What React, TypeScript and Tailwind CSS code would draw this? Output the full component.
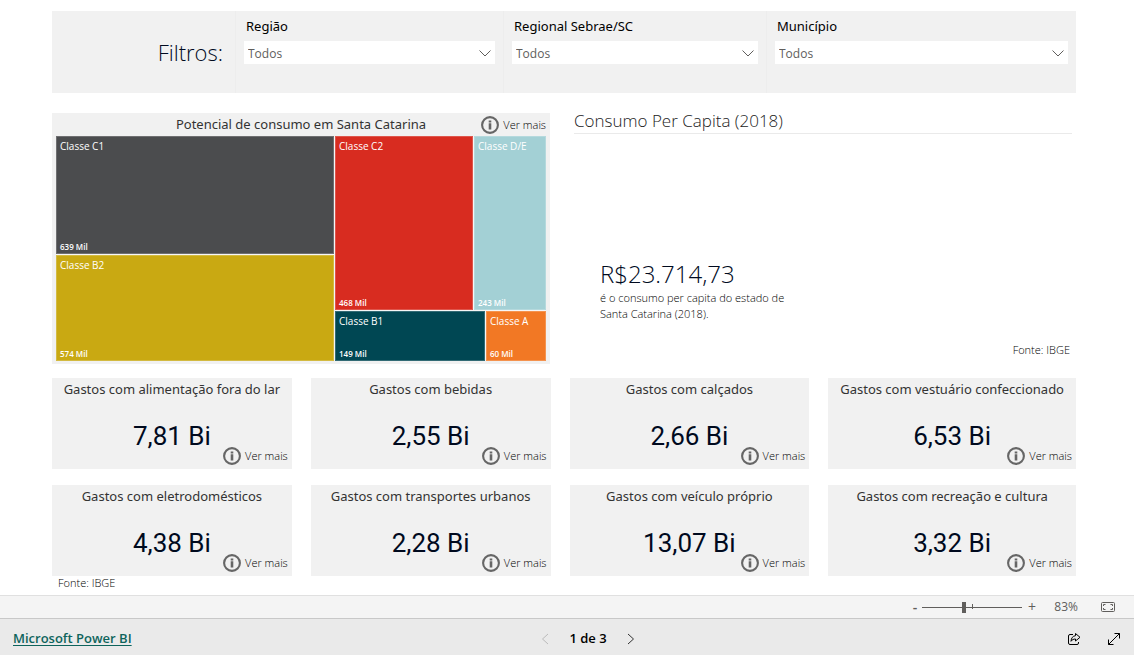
import { useState } from "react";

const filters = [
  { id: "regiao", label: "Região", options: ["Todos"] },
  { id: "regional", label: "Regional Sebrae/SC", options: ["Todos"] },
  { id: "municipio", label: "Município", options: ["Todos"] },
];

const expenses = [
  { title: "Gastos com alimentação fora do lar", value: "7,81 Bi" },
  { title: "Gastos com bebidas", value: "2,55 Bi" },
  { title: "Gastos com calçados", value: "2,66 Bi" },
  { title: "Gastos com vestuário confeccionado", value: "6,53 Bi" },
  { title: "Gastos com eletrodomésticos", value: "4,38 Bi" },
  { title: "Gastos com transportes urbanos", value: "2,28 Bi" },
  { title: "Gastos com veículo próprio", value: "13,07 Bi" },
  { title: "Gastos com recreação e cultura", value: "3,32 Bi" },
];

export default function App() {
  return (
    <div className="flex min-h-screen flex-col bg-white font-['Open_Sans','Noto_Sans',sans-serif] text-black">
      <main className="flex-1 pt-[11px] pr-[58px] pl-[52px]">
        <Filters />

        <div className="mt-5 grid grid-cols-[498fr_506fr] gap-5">
          <Treemap />
          <PerCapita />
        </div>

        <div className="mt-[14px] grid grid-cols-[240fr_240fr_240fr_248fr] gap-x-[19px] gap-y-4">
          {expenses.map((item) => (
            <ExpenseCard key={item.title} {...item} />
          ))}
        </div>
        <p className="pl-[6px] text-[11px] leading-[14px] font-light">Fonte: IBGE</p>
      </main>

      <ZoomBar />
      <Footer />
    </div>
  );
}

function Filters() {
  return (
    <section className="grid h-[82px] grid-cols-[183fr_268fr_263fr_310fr] bg-[#f1f1f1]">
      <h1 className="flex items-center justify-end pr-3 text-[22px] font-light text-[#000a1e]">Filtros:</h1>
      {filters.map((filter) => (
        <div key={filter.id} className="border-l border-[#ededed] pt-[7px] pr-2 pl-2">
          <label htmlFor={filter.id} className="block pl-[2px] font-['Noto_Sans',sans-serif] text-[13px] leading-4">
            {filter.label}
          </label>
          <div className="relative mt-[7px]">
            <select
              id={filter.id}
              className="block h-[23px] w-full appearance-none bg-white pt-[2px] pl-1 text-[12px] text-[#605e5c] outline-none"
            >
              {filter.options.map((option) => (
                <option key={option}>{option}</option>
              ))}
            </select>
            <svg
              viewBox="0 0 12 7"
              className="pointer-events-none absolute top-[9px] right-1 h-[7px] w-3 fill-none stroke-[#605e5c]"
            >
              <path d="M0.5 0.5 6 6 11.5 0.5" />
            </svg>
          </div>
        </div>
      ))}
    </section>
  );
}

function Treemap() {
  return (
    <section className="flex h-[251px] flex-col bg-[#f1f1f1] px-1 pb-[3px]">
      <div className="grid h-[23px] grid-cols-[1fr_auto_1fr] items-center">
        <h2 className="col-start-2 font-['Noto_Sans',sans-serif] text-[13px] text-[#333]">
          Potencial de consumo em Santa Catarina
        </h2>
        <div className="flex justify-end">
          <MoreButton />
        </div>
      </div>
      <div className="grid flex-1 grid-cols-[278fr_211fr] gap-px bg-[#f6f6f6]">
        <div className="grid grid-rows-[117fr_105fr] gap-px">
          <Tile name="Classe C1" value="639 Mil" className="bg-[#4b4c4e]" />
          <Tile name="Classe B2" value="574 Mil" className="bg-[#c9a912]" />
        </div>
        <div className="grid grid-rows-[172fr_50fr] gap-px">
          <div className="grid grid-cols-[138fr_72fr] gap-px">
            <Tile name="Classe C2" value="468 Mil" className="bg-[#d82c20]" />
            <Tile name="Classe D/E" value="243 Mil" className="bg-[#a3d0d5]" />
          </div>
          <div className="grid grid-cols-[150fr_60fr] gap-px">
            <Tile name="Classe B1" value="149 Mil" className="bg-[#004753]" />
            <Tile name="Classe A" value="60 Mil" className="bg-[#f27824]" />
          </div>
        </div>
      </div>
    </section>
  );
}

function Tile({ name, value, className }: { name: string; value: string; className: string }) {
  return (
    <div className={`flex flex-col justify-between border border-white/20 px-[3px] pt-[2px] text-white ${className}`}>
      <span className="text-[10px] leading-[14px] font-medium">{name}</span>
      <span className="text-[8px] leading-3 font-semibold">{value}</span>
    </div>
  );
}

function PerCapita() {
  return (
    <section className="flex flex-col pr-1 pl-1">
      <h2 className="border-b border-[#eaeaea] pb-[4px] text-[17px] leading-4 font-light text-[#222]">
        Consumo Per Capita (2018)
      </h2>
      <div className="mt-[124px] pl-[26px]">
        <p className="text-[24px] leading-8 font-light text-[#000a1e]">R$23.714,73</p>
        <p className="max-w-[200px] text-[11px] leading-4 font-light">
          é o consumo per capita do estado de Santa Catarina (2018).
        </p>
      </div>
      <p className="mt-auto pr-[2px] pb-[6px] text-right text-[11px] leading-4 font-light">Fonte: IBGE</p>
    </section>
  );
}

function ExpenseCard({ title, value }: { title: string; value: string }) {
  return (
    <article className="relative h-[91px] bg-[#f1f1f1] pt-px text-center">
      <h3 className="font-['Noto_Sans',sans-serif] text-[13px] leading-5 whitespace-nowrap text-[#333]">{title}</h3>
      <p className="mt-[22px] font-[Roboto,sans-serif] text-[26px] leading-[30px] text-[#000a1e]">{value}</p>
      <div className="absolute right-1 bottom-1">
        <MoreButton />
      </div>
    </article>
  );
}

function MoreButton() {
  return (
    <button type="button" className="flex items-center gap-1 text-[11px] leading-[18px] font-light">
      <svg viewBox="0 0 18 18" className="size-[18px] fill-none stroke-[#666]">
        <circle cx="9" cy="9" r="7.900" strokeWidth="2.100" />
        <path d="M9 4.500v2M9 7.300v6.200" strokeWidth="2.600" />
      </svg>
      Ver mais
    </button>
  );
}

function ZoomBar() {
  const [zoom, setZoom] = useState(83);

  return (
    <div className="flex h-[23px] items-center justify-end border-t border-[#e0e0e0] bg-[#f4f4f4] pr-[19px] text-[#605e5c]">
      <button
        type="button"
        aria-label="Reduzir"
        className="w-[14px] text-center text-[14px] leading-5 font-semibold"
        onClick={() => setZoom(Math.max(0, zoom - 10))}
      >
        -
      </button>
      <div className="relative flex h-3 w-[100px] items-center">
        <span className="absolute top-[3px] left-1/2 h-[5px] w-px bg-[#605e5c]" />
        <input
          type="range"
          aria-label="Zoom"
          min={0}
          max={200}
          value={zoom}
          onChange={(e) => setZoom(Number(e.target.value))}
          className="relative h-px w-full appearance-none bg-[#605e5c] outline-none [&::-webkit-slider-thumb]:h-[11px] [&::-webkit-slider-thumb]:w-1 [&::-webkit-slider-thumb]:appearance-none [&::-webkit-slider-thumb]:bg-[#605e5c]"
        />
      </div>
      <button
        type="button"
        aria-label="Ampliar"
        className="w-5 text-center text-[14px] leading-5"
        onClick={() => setZoom(Math.min(200, zoom + 10))}
      >
        +
      </button>
      <span className="w-[36px] text-right text-[12px]">{zoom}%</span>
      <button type="button" aria-label="Ajustar à página" className="ml-[23px]">
        <svg viewBox="0 0 14 10" className="h-[10px] w-[14px] fill-none stroke-[#605e5c]">
          <rect x="0.5" y="0.5" width="13" height="9" rx="1" />
          <path d="M4.5 2.5h-2v1.5M9.5 2.5h2v1.5M4.5 7.5h-2v-1.5M9.5 7.5h2v-1.5" />
        </svg>
      </button>
    </div>
  );
}

function Footer() {
  return (
    <footer className="grid h-[37px] grid-cols-[1fr_auto_1fr] items-center border-t border-[#c8c8c8] bg-[#eaeaea] px-[13px] pt-[3px]">
      <a href="#" className="justify-self-start text-[13px] font-semibold text-[#0e645c] underline underline-offset-2">
        Microsoft Power BI
      </a>
      <nav className="flex items-center gap-5 pl-[42px]">
        <button type="button" aria-label="Página anterior" disabled>
          <svg viewBox="0 0 8 12" className="h-3 w-2 fill-none stroke-[#bbb]">
            <path d="M7 1 1.5 6 7 11" />
          </svg>
        </button>
        <span className="text-[13px] font-semibold">1 de 3</span>
        <button type="button" aria-label="Próxima página">
          <svg viewBox="0 0 8 12" className="h-3 w-2 fill-none stroke-[#333]">
            <path d="M1 1 6.5 6 1 11" />
          </svg>
        </button>
      </nav>
      <div className="flex items-center gap-[26px] justify-self-end">
        <button type="button" aria-label="Compartilhar">
          <svg viewBox="0 0 14 14" className="size-[14px] fill-none stroke-black">
            <path d="M6 2.5H3A1.5 1.5 0 0 0 1.5 4v7A1.5 1.5 0 0 0 3 12.5h7a1.5 1.5 0 0 0 1.5-1.5v-1" />
            <path d="M8.5 1.5 13 5.3 8.5 9V7C6.5 7 5 7.7 4 9.3 4.2 6 5.800 4 8.5 3.7Z" strokeLinejoin="round" />
          </svg>
        </button>
        <button type="button" aria-label="Tela inteira">
          <svg viewBox="0 0 14 14" className="size-[14px] fill-none stroke-black">
            <path d="M1.5 12.5 12.5 1.5M7.5 1.5h5v5M1.5 7.5v5h5" />
          </svg>
        </button>
      </div>
    </footer>
  );
}
